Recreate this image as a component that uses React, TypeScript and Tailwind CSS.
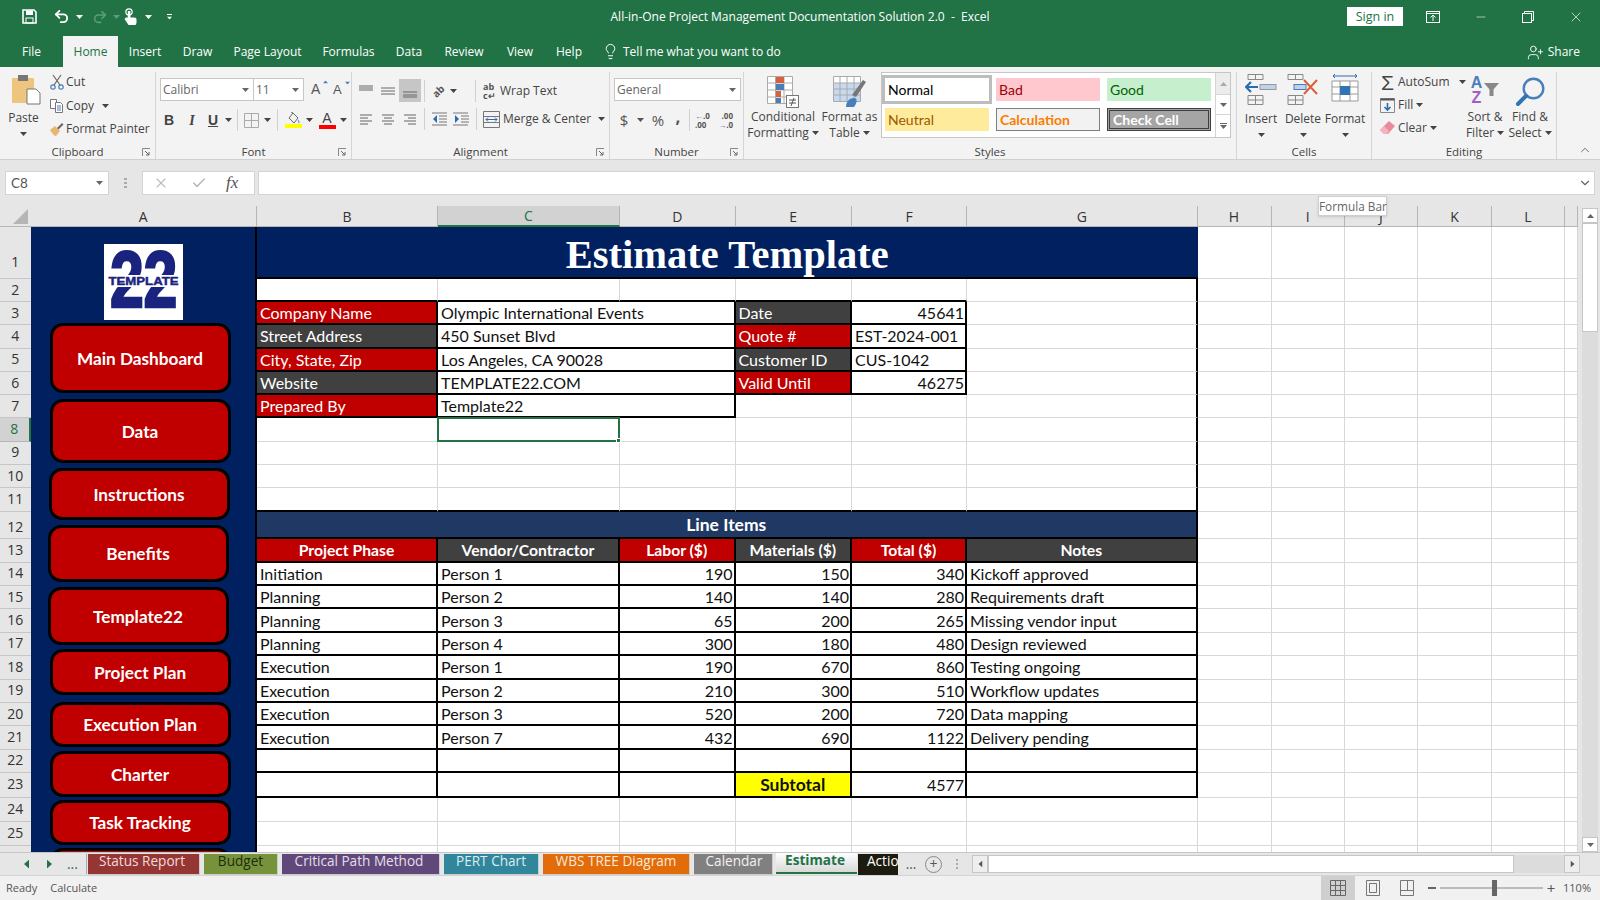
import React from 'react';
import { Undo2, Redo2, X, Minus, Lightbulb, UserPlus, Check, ChevronUp, ChevronDown } from 'lucide-react';

const Caret = ({ className = '' }: { className?: string }) => (
  <svg width="7" height="4" viewBox="0 0 7 4" className={`shrink-0 ${className}`}>
    <path d="M0 0h7L3.5 4z" fill="currentColor" />
  </svg>
);

const Launcher = () => (
  <svg width="9" height="9" viewBox="0 0 9 9" className="absolute right-[4px] top-[3px]">
    <path d="M.5 8V.5H8" fill="none" stroke="#888" />
    <path d="M3 3l4 4M7 4v3H4" fill="none" stroke="#666" />
  </svg>
);

const Divider = ({ className = '' }: { className?: string }) => <div className={`w-px h-[22px] bg-[#d0d0d0] ${className}`} />;

const Lines = ({ rows, color = '#666' }: { rows: [number, number, number][]; color?: string }) => (
  <svg width="16" height="16" viewBox="0 0 16 16">
    {rows.map(([a, b, y], i) => (
      <line key={i} x1={a} x2={b} y1={y} y2={y} stroke={color} strokeWidth="1" />
    ))}
  </svg>
);

const Group = ({ width, label, launcher, children }: { width: string; label: string; launcher?: boolean; children: React.ReactNode }) => (
  <div className={`${width} h-[87px] mt-[5px] flex flex-col border-r border-[#d6d6d6] shrink-0`}>
    <div className="flex-1 flex min-h-0">{children}</div>
    <div className="relative h-[14px] leading-[14px] text-center text-[11.5px] text-[#444]">
      {label}
      {launcher && <Launcher />}
    </div>
  </div>
);

const BigButton = ({ width, icon, top, bottom }: { width: string; icon: React.ReactNode; top: string; bottom: string }) => (
  <div className={`${width} flex flex-col items-center shrink-0`}>
    <div className="h-[38px] flex items-center justify-center">{icon}</div>
    <div className="h-[16px] leading-[16px] mt-[-1px] whitespace-nowrap">{top}</div>
    <div className="h-[16px] leading-[16px] whitespace-nowrap flex items-center gap-[3px]">
      {bottom}
      <Caret />
    </div>
  </div>
);

const TitleBar = () => (
  <div className="h-[33px] grid grid-cols-[1fr_auto_1fr] items-center text-white">
    <div className="flex items-center pl-[22px]">
      <svg width="15" height="15" viewBox="0 0 15 15" className="mr-[16px]">
        <path d="M1 1h11l2 2v11H1z" fill="none" stroke="#fff" strokeWidth="1.6" />
        <rect x="4" y="1.5" width="7" height="4.5" fill="#fff" />
        <rect x="4" y="9" width="7" height="5" fill="none" stroke="#fff" />
      </svg>
      <Undo2 size={17} strokeWidth={2.6} />
      <Caret className="ml-[6px]" />
      <Redo2 size={16} strokeWidth={2.4} className="ml-[9px] text-[#5c9c7c]" />
      <Caret className="ml-[5px] text-[#5c9c7c]" />
      <svg width="15" height="17" viewBox="0 0 15 17" className="ml-[3px]">
        <circle cx="6" cy="4" r="3.200" fill="none" stroke="#fff" strokeWidth="1.200" />
        <rect x="4.800" y="3" width="2.600" height="8" fill="#fff" />
        <path d="M3 9.500h8.500q2 0 2 2V15l-1 2H5.500L1.500 11z" fill="#fff" />
      </svg>
      <Caret className="ml-[7px]" />
      <div className="ml-[14px] flex flex-col items-center gap-[1px]">
        <div className="w-[5px] h-px bg-white" />
        <Caret className="scale-75" />
      </div>
    </div>
    <div className="text-[12px] whitespace-pre">All-in-One Project Management Documentation Solution 2.0  -  Excel</div>
    <div className="flex items-center justify-end">
      <div className="w-[56px] h-[19px] bg-white text-[#217346] text-[12.5px] leading-[19px] text-center">Sign in</div>
      <svg width="14" height="12" viewBox="0 0 14 12" className="ml-[23px]">
        <rect x=".5" y=".5" width="13" height="11" fill="none" stroke="#fff" />
        <path d="M.5 2.5h13M7 10V4M4.5 6.5L7 4l2.5 2.5" fill="none" stroke="#fff" />
      </svg>
      <Minus size={14} strokeWidth={1} className="ml-[34px]" />
      <svg width="12" height="12" viewBox="0 0 12 12" className="ml-[34px]">
        <rect x=".5" y="2.5" width="9" height="9" fill="none" stroke="#fff" />
        <path d="M2.5 2.5v-2h9v9h-2" fill="none" stroke="#fff" />
      </svg>
      <X size={16} strokeWidth={1} className="ml-[34px] mr-[16px]" />
    </div>
  </div>
);

const MENU = [
  ['Insert', 'w-[54px]'],
  ['Draw', 'w-[51px]'],
  ['Page Layout', 'w-[89px]'],
  ['Formulas', 'w-[73px]'],
  ['Data', 'w-[48px]'],
  ['Review', 'w-[62px]'],
  ['View', 'w-[50px]'],
  ['Help', 'w-[48px]'],
];

const MenuBar = () => (
  <div className="h-[34px] flex items-end text-white text-[12px]">
    <div className="w-[63px] h-[34px] leading-[37px] text-center">File</div>
    <div className="w-[55px] h-[31px] leading-[31px] text-center bg-[#f3f3f3] text-[#217346]">Home</div>
    {MENU.map(([name, w]) => (
      <div key={name} className={`${w} h-[34px] leading-[37px] text-center`}>{name}</div>
    ))}
    <div className="h-[34px] flex items-center ml-[9px] pt-[3px]">
      <Lightbulb size={17} strokeWidth={1.4} />
      <span className="ml-[4px]">Tell me what you want to do</span>
    </div>
    <div className="ml-auto h-[34px] flex items-center mr-[20px] pt-[4px] text-[12px]">
      <UserPlus size={17} strokeWidth={1.3} className="mr-[4px]" />
      Share
    </div>
  </div>
);

const SmallRow = ({ icon, children }: { icon: React.ReactNode; children: React.ReactNode }) => (
  <div className="h-5 flex items-center whitespace-nowrap">
    <div className="w-[19px] flex justify-center shrink-0">{icon}</div>
    {children}
  </div>
);

const ClipboardGroup = () => (
  <Group width="w-[156px]" label="Clipboard" launcher>
    <div className="w-[47px] flex flex-col items-center">
      <svg width="30" height="30" viewBox="0 0 30 30" className="mt-[3px] ml-[5px] shrink-0">
        <rect x="1" y="3" width="22" height="25" rx="1" fill="#edc57d" />
        <rect x="7" y="0" width="10" height="6" fill="#777" />
        <path d="M16 14h9l4 4v11H16z" fill="#fff" stroke="#777" />
      </svg>
      <div className="mt-[6px] leading-[14px]">Paste</div>
      <Caret className="mt-[7px]" />
    </div>
    <div className="flex flex-col gap-[3.5px]">
      <SmallRow icon={
        <svg width="14" height="16" viewBox="0 0 14 16" fill="none" stroke="#4a7ebb" strokeWidth="1.2">
          <circle cx="3" cy="13" r="2.2" />
          <circle cx="11" cy="13" r="2.2" />
          <path d="M4 11L11 1M10 11L3 1" stroke="#666" />
        </svg>
      }>Cut</SmallRow>
      <SmallRow icon={
        <svg width="15" height="15" viewBox="0 0 15 15" fill="#fff" stroke="#777">
          <path d="M1.5 1.5h6v9h-6z" />
          <path d="M6.5 4.5h5l2 2v8h-7z" />
          <path d="M8 8h4M8 10h4M8 12h4" stroke="#4a7ebb" />
        </svg>
      }>
        Copy
        <Caret className="ml-[8px]" />
      </SmallRow>
      <SmallRow icon={
        <svg width="15" height="15" viewBox="0 0 15 15">
          <path d="M1 8l5-4 5 5-4 5c-2 0-4-3-6-6z" fill="#e8b66e" />
          <path d="M8 6l5-5 1.5 1.5-5 5z" fill="#666" />
        </svg>
      }>Format Painter</SmallRow>
    </div>
  </Group>
);

const FontGroup = () => (
  <Group width="w-[196px]" label="Font" launcher>
    <div className="pl-[4px] flex flex-col">
      <div className="flex items-center mt-[6px]">
        <div className="w-[94px] h-[23px] bg-white border border-[#c6c6c6] flex items-center justify-between px-[2px] pr-[4px] text-[#666]">
          Calibri
          <Caret />
        </div>
        <div className="w-[50px] h-[23px] bg-white border border-l-0 border-[#c6c6c6] flex items-center justify-between px-[2px] pr-[4px] text-[#666]">
          11
          <Caret />
        </div>
        <div className="ml-[7px] w-[20px] text-[14px] font-['Liberation_Sans',sans-serif] text-[#555] relative">
          A<Caret className="absolute right-[2px] top-[1px] rotate-180 scale-75 text-[#4a7ebb]" />
        </div>
        <div className="ml-[2px] w-[20px] text-[13px] font-['Liberation_Sans',sans-serif] text-[#555] relative">
          A<Caret className="absolute right-[2px] top-[1px] scale-75 text-[#4a7ebb]" />
        </div>
      </div>
      <div className="flex items-center mt-[9px] h-5 text-[#444]">
        <div className="w-[22px] text-center font-bold text-[14px] font-['Liberation_Sans',sans-serif] ml-[-2px]">B</div>
        <div className="w-[22px] text-center italic font-bold text-[14px] font-['Liberation_Serif',serif] ml-[1px]">I</div>
        <div className="w-[20px] text-center font-bold underline text-[14px] font-['Liberation_Sans',sans-serif]">U</div>
        <Caret className="ml-[2px]" />
        <Divider className="ml-[5px]" />
        <svg width="15" height="15" viewBox="0 0 15 15" className="ml-[6px]" fill="none" stroke="#aaa">
          <path d="M.5.5h14v14H.5zM7.5.5v14M.5 7.5h14" />
        </svg>
        <Caret className="ml-[5px]" />
        <Divider className="ml-[6px]" />
        <div className="ml-[6px] w-[18px] flex flex-col items-center">
          <svg width="13" height="12" viewBox="0 0 13 12" fill="none" stroke="#666">
            <path d="M6 1l5 5-4 5-5-5zM6 1L4 0" />
            <path d="M11 8c1 1 1.500 3 .5 3" stroke="#4a7ebb" />
          </svg>
          <div className="w-[17px] h-[4px] bg-[#ffff00]" />
        </div>
        <Caret className="ml-[4px]" />
        <div className="ml-[5px] w-[18px] flex flex-col items-center">
          <div className="text-[14px] leading-[12px] font-['Liberation_Sans',sans-serif] text-[#444]">A</div>
          <div className="w-[17px] h-[4px] mt-[1px] bg-[#ff0000]" />
        </div>
        <Caret className="ml-[4px]" />
      </div>
    </div>
  </Group>
);

const AlignmentGroup = () => (
  <Group width="w-[258px]" label="Alignment" launcher>
    <div className="flex flex-col pl-[3px]">
      <div className="flex items-center mt-[7px] h-[23px]">
        <div className="w-[22px] flex justify-center"><Lines rows={[[1, 15, 3], [1, 15, 5], [1, 15, 7]]} /></div>
        <div className="w-[22px] flex justify-center"><Lines rows={[[1, 15, 5], [1, 15, 8], [1, 15, 11]]} /></div>
        <div className="w-[22px] h-[23px] bg-[#c6c6c6] flex justify-center items-center"><Lines rows={[[1, 15, 9], [1, 15, 12], [1, 15, 14]]} /></div>
        <Divider className="ml-[3px]" />
        <div className="ml-[3px] w-[20px] text-[10px] font-bold leading-none -rotate-45 text-center text-[#555]">ab</div>
        <Caret className="ml-[2px]" />
        <Divider className="ml-[18px]" />
        <div className="ml-[7px] w-[16px] text-[9px] leading-[9px] font-bold text-[#555]">ab<br />c↵</div>
        <span className="ml-[1px]">Wrap Text</span>
      </div>
      <div className="flex items-center mt-[7px] h-5">
        <div className="w-[22px] flex justify-center"><Lines rows={[[2, 14, 4], [2, 10, 7], [2, 14, 10], [2, 10, 13]]} /></div>
        <div className="w-[22px] flex justify-center"><Lines rows={[[2, 14, 4], [4, 12, 7], [2, 14, 10], [4, 12, 13]]} /></div>
        <div className="w-[22px] flex justify-center"><Lines rows={[[2, 14, 4], [6, 14, 7], [2, 14, 10], [6, 14, 13]]} /></div>
        <Divider className="ml-[3px]" />
        <svg width="16" height="14" viewBox="0 0 16 14" className="ml-[6px]" fill="none">
          <path d="M1 1h15M8 4h8M8 7h8M8 10h8M1 13h15" stroke="#777" />
          <path d="M6 3L2 7l4 4z" fill="#2b6cb0" />
        </svg>
        <svg width="16" height="14" viewBox="0 0 16 14" className="ml-[6px]" fill="none">
          <path d="M0 1h15M8 4h8M8 7h8M8 10h8M0 13h15" stroke="#777" />
          <path d="M2 3l4 4-4 4z" fill="#2b6cb0" />
        </svg>
        <Divider className="ml-[7px]" />
        <svg width="17" height="17" viewBox="0 0 17 17" className="ml-[6px]" fill="none" stroke="#777">
          <path d="M.5.5h16v16H.5zM.5 5.500h16M.5 11.500h16" />
          <path d="M3 8.500h11M5 6.500l-2 2 2 2M12 6.500l2 2-2 2" stroke="#2b6cb0" />
        </svg>
        <span className="ml-[3px] whitespace-nowrap">Merge &amp; Center</span>
        <Caret className="ml-[7px]" />
      </div>
    </div>
  </Group>
);

const NumberGroup = () => (
  <Group width="w-[134px]" label="Number" launcher>
    <div className="pl-[4px] flex flex-col">
      <div className="w-[127px] h-[23px] mt-[6px] bg-white border border-[#c6c6c6] flex items-center justify-between px-[2px] pr-[4px] text-[#666]">
        General
        <Caret />
      </div>
      <div className="flex items-center mt-[9px] h-5 text-[#555]">
        <span className="w-[20px] text-center text-[15px]">$</span>
        <Caret className="ml-[3px]" />
        <span className="ml-[5px] w-[18px] text-center text-[15px]">%</span>
        <span className="ml-[6px] w-[10px] text-center font-bold text-[17px] leading-[14px] -translate-y-[3px]">,</span>
        <Divider className="ml-[6px]" />
        <div className="ml-[5px] w-[18px] text-[8px] leading-[9px] font-bold"><span className="text-[#2b6cb0]">←</span>.0<br />.00</div>
        <div className="ml-[2px] w-[18px] text-[8px] leading-[9px] font-bold text-right">.00<br /><span className="text-[#2b6cb0]">→</span>.0</div>
      </div>
    </div>
  </Group>
);

const StyleCell = ({ className, children }: { className: string; children: React.ReactNode }) => (
  <div className={`h-[23px] px-[3px] font-['Lato',sans-serif] text-[14px] whitespace-nowrap ${className}`}>{children}</div>
);

const StylesGroup = () => (
  <Group width="w-[493px]" label="Styles">
    <div className="pl-[4px]">
      <BigButton width="w-[70px]" top="Conditional" bottom="Formatting" icon={
        <svg width="32" height="33" viewBox="0 0 32 33" className="mt-[2px]">
          <path d="M.5.5h25v27H.5zM8.500.5v27M17 .5v27M.5 7h25M.5 14h25M.5 21h25" fill="#fff" stroke="#aaa" />
          <rect x="9" y="1" width="8" height="6" fill="#d9603a" />
          <rect x="9" y="8" width="8" height="6" fill="#4a7ebb" />
          <rect x="9" y="15" width="5" height="6" fill="#d9603a" />
          <rect x="9" y="22" width="5" height="5" fill="#4a7ebb" />
          <rect x="19.500" y="19.500" width="12" height="12" fill="#fff" stroke="#777" />
          <path d="M22 24h7M22 27h7M27 22l-3 8" stroke="#555" fill="none" />
        </svg>
      } />
    </div>
    <BigButton width="w-[63px]" top="Format as" bottom="Table" icon={
      <svg width="34" height="33" viewBox="0 0 34 33" className="mt-[2px]">
        <path d="M.5.5h27v25H.5z" fill="#fff" stroke="#aaa" />
        <rect x="1" y="7" width="26" height="18" fill="#c6d9f0" />
        <path d="M7 .5v25M14 .5v25M21 .5v25M.5 7h27M.5 13h27M.5 19h27" stroke="#aaa" fill="none" />
        <path d="M19 19l11-15 3 2-10 15z" fill="#777" />
        <path d="M13 31c0-6 4-9 8-9s3 5 0 9z" fill="#4a7ebb" />
      </svg>
    } />
    <div className="w-[350px] h-[66px] flex bg-white border border-[#c6c6c6]">
      <div className="flex-1 grid grid-cols-3 gap-x-[7px] gap-y-[7px] pl-[3px] pr-[4px] pt-[5px] content-start">
        <StyleCell className="leading-[23px] bg-white text-black outline-[3px] outline-[#bdbdbd]">Normal</StyleCell>
        <StyleCell className="leading-[23px] bg-[#ffc7ce] text-[#9c0006]">Bad</StyleCell>
        <StyleCell className="leading-[23px] bg-[#c6efce] text-[#006100]">Good</StyleCell>
        <StyleCell className="leading-[23px] bg-[#ffeb9c] text-[#9c5700]">Neutral</StyleCell>
        <StyleCell className="leading-[21px] bg-[#f2f2f2] text-[#fa7d00] font-bold border border-[#7f7f7f]">Calculation</StyleCell>
        <StyleCell className="leading-[17px] bg-[#a5a5a5] text-white font-bold border-[3px] border-double border-[#3f3f3f]">Check Cell</StyleCell>
      </div>
      <div className="w-[15px] flex flex-col border-l border-[#d4d4d4] text-[#666]">
        <div className="h-[22px] flex items-center justify-center border-b border-[#d4d4d4] bg-[#ececec]"><Caret className="rotate-180 text-[#aaa]" /></div>
        <div className="h-[20px] flex items-center justify-center border-b border-[#d4d4d4]"><Caret /></div>
        <div className="flex-1 flex flex-col items-center justify-center gap-[1px]">
          <div className="w-[7px] h-px bg-[#666]" />
          <Caret />
        </div>
      </div>
    </div>
  </Group>
);

const CellsGroup = () => (
  <Group width="w-[135px]" label="Cells">
    <div className="pl-[3px] flex">
      <div className="w-[42px] flex flex-col items-center">
        <svg width="32" height="32" viewBox="0 0 32 32" className="mt-[2px]" fill="none" stroke="#888">
          <path d="M3 .5h15v5H3zM10.500.5v5M3 21.500h15v9H3zM10.500 21.500v9M3 26h15" />
          <rect x="15" y="10.500" width="16" height="5" fill="#bcd3ea" stroke="#999" />
          <path d="M13 13H1M6 8l-5 5 5 5" stroke="#2b6cb0" strokeWidth="2.200" />
        </svg>
        <div className="mt-[5px] leading-[16px]">Insert</div>
        <Caret className="mt-[6px]" />
      </div>
      <div className="w-[42px] flex flex-col items-center">
        <svg width="32" height="32" viewBox="0 0 32 32" className="mt-[2px]" fill="none" stroke="#888">
          <path d="M1 .5h15v5H1zM8.500.5v5M1 21.500h15v9H1zM8.500 21.500v9M1 26h15" />
          <rect x="7" y="10.500" width="12" height="5" fill="#bcd3ea" stroke="#4a7ebb" />
          <path d="M17 6l13 14M30 6L17 20" stroke="#d9603a" strokeWidth="2" />
        </svg>
        <div className="mt-[5px] leading-[16px]">Delete</div>
        <Caret className="mt-[6px]" />
      </div>
      <div className="w-[42px] flex flex-col items-center">
        <svg width="32" height="32" viewBox="0 0 32 32" className="mt-[1px]" fill="none" stroke="#999">
          <path d="M3 8h26v20H3zM11 8v20M21 8v20M3 14h26M3 21h26" fill="#fff" />
          <rect x="11" y="13" width="10" height="9" fill="#2f75b5" stroke="none" />
          <path d="M4 3h24M4 3l2-2M4 3l2 2M28 3l-2-2M28 3l-2 2" stroke="#2b6cb0" />
        </svg>
        <div className="mt-[6px] leading-[16px]">Format</div>
        <Caret className="mt-[6px]" />
      </div>
    </div>
  </Group>
);

const EditingGroup = () => (
  <Group width="w-[185px]" label="Editing">
    <div className="w-[90px] pl-[6px] flex flex-col gap-[3px]">
      <SmallRow icon={<span className="text-[21px] leading-none text-[#444] font-['Liberation_Sans',sans-serif]">Σ</span>}>
        <span className="ml-[1px]">AutoSum</span>
        <Caret className="ml-[9px]" />
      </SmallRow>
      <SmallRow icon={
        <svg width="15" height="15" viewBox="0 0 15 15" fill="none">
          <path d="M.5.5h14v14H.5z" stroke="#888" />
          <path d="M.5 1.500h14" stroke="#555" strokeWidth="2" />
          <path d="M7.500 5v7M4.500 9l3 3 3-3" stroke="#2b6cb0" strokeWidth="1.600" />
        </svg>
      }>
        <span className="ml-[1px]">Fill</span>
        <Caret className="ml-[3px]" />
      </SmallRow>
      <SmallRow icon={
        <svg width="15" height="14" viewBox="0 0 15 14">
          <path d="M9 0l6 5-7 8H4L0 9z" fill="#e98b9b" />
          <path d="M0 9l4-4 5 5-2 3H4z" fill="#f3b4be" />
        </svg>
      }>
        <span className="ml-[1px]">Clear</span>
        <Caret className="ml-[3px]" />
      </SmallRow>
    </div>
    <BigButton width="w-[46px]" top="Sort &" bottom="Filter" icon={
      <div className="flex items-center mt-[-3px] font-['Liberation_Sans',sans-serif]">
        <div className="text-[16px] leading-[15px] font-bold text-center">
          <div className="text-[#4a7ebb]">A</div>
          <div className="text-[#9f5fc1]">Z</div>
        </div>
        <svg width="15" height="15" viewBox="0 0 15 15" className="ml-[2px]">
          <path d="M0 1h15L9.500 7.500V14h-4V7.500z" fill="#888" />
        </svg>
      </div>
    } />
    <BigButton width="w-[44px]" top="Find &" bottom="Select" icon={
      <svg width="30" height="30" viewBox="0 0 30 30" className="mt-[2px]" fill="none">
        <circle cx="18.500" cy="11.500" r="9.800" stroke="#4a7ebb" strokeWidth="2.400" />
        <path d="M11 19L3 27" stroke="#2f75b5" strokeWidth="4" strokeLinecap="round" />
      </svg>
    } />
  </Group>
);

const Ribbon = () => (
  <div className="h-[93px] flex bg-[#f3f3f3] border-b border-[#d0d0d0] text-[12px] text-[#444] relative">
    <ClipboardGroup />
    <FontGroup />
    <AlignmentGroup />
    <NumberGroup />
    <StylesGroup />
    <CellsGroup />
    <EditingGroup />
    <div className="flex-1 flex items-end justify-end pr-[8px] pb-[2px]">
      <ChevronUp size={14} strokeWidth={1.4} className="text-[#555]" />
    </div>
  </div>
);

const FormulaStrip = () => (
  <div className="h-[46px] relative flex items-start pt-[11px] pl-[5px] bg-[#e6e6e6] text-[#555]">
    <div className="w-[104px] h-[24px] bg-white border border-[#d4d4d4] flex items-center justify-between pl-[5px] pr-[5px] font-['Lato',sans-serif] text-[13.5px]">
      C8
      <Caret className="text-[#666]" />
    </div>
    <div className="w-[33px] h-[24px] flex flex-col items-center justify-center gap-[2px]">
      <div className="w-[3px] h-[2px] bg-[#aaa]" />
      <div className="w-[3px] h-[2px] bg-[#aaa]" />
      <div className="w-[3px] h-[2px] bg-[#aaa]" />
    </div>
    <div className="w-[113px] h-[24px] bg-white border border-[#d4d4d4] flex items-center">
      <X size={16} strokeWidth={1.6} className="ml-[10px] text-[#bbb]" />
      <Check size={16} strokeWidth={2.4} className="ml-[22px] text-[#bbb]" />
      <span className="ml-[19px] font-['Liberation_Serif',serif] italic text-[17px] text-[#555]">fx</span>
    </div>
    <div className="flex-1 ml-[3px] mr-[5px] h-[24px] bg-white border border-[#d4d4d4] flex items-center justify-end pr-[2px]">
      <ChevronDown size={14} strokeWidth={2} className="text-[#666]" />
    </div>
    <div className="absolute left-[1318px] top-[36px] w-[69px] h-[20px] bg-white border border-[#cfcfcf] shadow-sm text-[11.8px] leading-[18px] text-center text-[#666] z-10 whitespace-nowrap">
      Formula Bar
    </div>
  </div>
);

const GRID_COLS = 'grid-cols-[30.5px_226.5px_181px_182px_115.5px_116.5px_115px_230.5px_74px_73.5px_73px_74px_73px_13px]';
const GRID_ROWS = 'grid-rows-[21px_52px_23px_repeat(9,23.3px)_27.5px_repeat(10,23.4px)_24.6px_24.8px_23.4px_24px]';

const COLUMN_HEADS = ['A', 'B', 'C', 'D', 'E', 'F', 'G', 'H', 'I', 'J', 'K', 'L', ''];

type Cell = { text?: string; className?: string };

const LIGHT = 'border-r border-b border-[#d8d8d8]';
const BOX = 'border-r-2 border-b-2 border-black pt-[1px]';
const RED = `${BOX} bg-[#c00000] text-white pl-[3px]`;
const DARK = `${BOX} bg-[#404040] text-white pl-[3px]`;
const VALUE = `${BOX} bg-white pl-[3px]`;
const NUM = `${BOX} bg-white justify-end pr-[1px]`;
const HEAD_RED = `${BOX} bg-[#c00000] text-white font-bold text-[15.7px] justify-center`;
const HEAD_DARK = `${BOX} bg-[#404040] text-white font-bold text-[15.7px] justify-center`;

const INFO: [string, string, string, string, string, string][] = [
  ['Company Name', 'Olympic International Events', 'Date', '45641', DARK, NUM],
  ['Street Address', '450 Sunset Blvd', 'Quote #', 'EST-2024-001', RED, VALUE],
  ['City, State, Zip', 'Los Angeles, CA 90028', 'Customer ID', 'CUS-1042', DARK, VALUE],
  ['Website', 'TEMPLATE22.COM', 'Valid Until', '46275', RED, NUM],
];

const ITEMS: [string, string, number, number, number, string][] = [
  ['Initiation', 'Person 1', 190, 150, 340, 'Kickoff approved'],
  ['Planning', 'Person 2', 140, 140, 280, 'Requirements draft'],
  ['Planning', 'Person 3', 65, 200, 265, 'Missing vendor input'],
  ['Planning', 'Person 4', 300, 180, 480, 'Design reviewed'],
  ['Execution', 'Person 1', 190, 670, 860, 'Testing ongoing'],
  ['Execution', 'Person 2', 210, 300, 510, 'Workflow updates'],
  ['Execution', 'Person 3', 520, 200, 720, 'Data mapping'],
  ['Execution', 'Person 7', 432, 690, 1122, 'Delivery pending'],
];

// cells for columns B..G of one sheet row, merged cells carry their own span class
const rowCells = (row: number): Cell[] => {
  const blank = (extra = ''): Cell => ({ className: `${LIGHT} ${extra}` });
  const gEdge = 'border-r-2 border-r-black';
  if (row === 1) {
    return [{
      text: 'Estimate Template',
      className: "col-span-6 bg-[#002060] text-white justify-center pt-[6px] font-['Liberation_Serif',serif] font-bold text-[40.5px] border-b-2 border-black",
    }];
  }
  if (row === 2) {
    const low = 'border-b-2 border-b-black';
    return [blank(low), blank(low), blank(low), blank(low), blank(low), blank(gEdge)];
  }
  if (row >= 3 && row <= 6) {
    const [label, value, label2, value2, labelCls, valueCls] = INFO[row - 3];
    return [
      { text: label, className: row % 2 ? RED : DARK },
      { text: value, className: `${VALUE} col-span-2` },
      { text: label2, className: labelCls },
      { text: value2, className: valueCls },
      blank(gEdge),
    ];
  }
  if (row === 7) {
    return [
      { text: 'Prepared By', className: RED },
      { text: 'Template22', className: `${VALUE} col-span-2` },
      blank(),
      blank(),
      blank(gEdge),
    ];
  }
  if (row >= 8 && row <= 11) {
    const low = row === 11 ? 'border-b-2 border-b-black' : '';
    return [blank(low), blank(low), blank(low), blank(low), blank(low), blank(`${low} ${gEdge}`)];
  }
  if (row === 12) {
    return [{ text: 'Line Items', className: `${BOX} col-span-6 bg-[#1f3864] text-white font-bold text-[17.5px] justify-center` }];
  }
  if (row === 13) {
    return [
      { text: 'Project Phase', className: HEAD_RED },
      { text: 'Vendor/Contractor', className: HEAD_DARK },
      { text: 'Labor ($)', className: HEAD_RED },
      { text: 'Materials ($)', className: HEAD_DARK },
      { text: 'Total ($)', className: HEAD_RED },
      { text: 'Notes', className: HEAD_DARK },
    ];
  }
  if (row >= 14 && row <= 21) {
    const [phase, person, labor, materials, total, notes] = ITEMS[row - 14];
    return [
      { text: phase, className: VALUE },
      { text: person, className: VALUE },
      { text: String(labor), className: NUM },
      { text: String(materials), className: NUM },
      { text: String(total), className: NUM },
      { text: notes, className: VALUE },
    ];
  }
  if (row === 22) {
    return Array.from({ length: 6 }, () => ({ className: BOX }));
  }
  if (row === 23) {
    return [
      { className: BOX },
      { className: BOX },
      { className: BOX },
      { text: 'Subtotal', className: `${BOX} bg-[#ffff00] font-bold text-[17.5px] justify-center` },
      { text: '4577', className: NUM },
      { className: BOX },
    ];
  }
  return [blank(), blank(), blank(), blank(), blank(), blank()];
};

const NAV = [
  ['Main Dashboard', 'mt-[3px] h-[70px] ml-[19px]'],
  ['Data', 'mt-[6px] h-[64px] ml-[19px]'],
  ['Instructions', 'mt-[5px] h-[52px] ml-[18px]'],
  ['Benefits', 'mt-[5px] h-[57px] ml-[17px]'],
  ['Template22', 'mt-[5px] h-[58px] ml-[17px]'],
  ['Project Plan', 'mt-[4px] h-[46px] ml-[19px]'],
  ['Execution Plan', 'mt-[7px] h-[45px] ml-[19px]'],
  ['Charter', 'mt-[4px] h-[46px] ml-[19px]'],
  ['Task Tracking', 'mt-[3px] h-[45px] ml-[19px]'],
  ['', 'mt-[3px] h-[45px] ml-[19px]'],
];

const Logo = () => (
  <div className="w-[79px] h-[76px] mt-[17px] ml-[73px] bg-white shrink-0">
    <svg width="79" height="76" viewBox="0 0 79 76">
      <g fill="#1a237e" stroke="#1a237e" strokeWidth="2.500" fontFamily="'Liberation Sans', sans-serif" fontWeight="700">
        <text x="0" y="63" fontSize="80" transform="scale(.76 1)">
          <tspan x="8">2</tspan>
          <tspan x="52">2</tspan>
        </text>
      </g>
      <rect x="0" y="31" width="79" height="12" fill="#fff" />
      <text x="4.500" y="41" fontSize="10.500" textLength="70" lengthAdjust="spacingAndGlyphs" fontWeight="700" fill="#1a237e" stroke="#1a237e" strokeWidth=".4" fontFamily="'Liberation Sans', sans-serif">TEMPLATE</text>
    </svg>
  </div>
);

const Sidebar = () => (
  <div className="col-start-2 row-[2/span_26] bg-[#002060] border-r-2 border-black flex flex-col overflow-hidden">
    <Logo />
    {NAV.map(([name, cls], i) => (
      <div key={i} className={`${cls} w-[181px] shrink-0 rounded-[13px] border-[3px] border-black bg-[#c00000] text-white font-bold text-[17.2px] pt-[1px] flex items-center justify-center`}>
        {name}
      </div>
    ))}
  </div>
);

const Sheet = () => (
  <div className={`w-[1578px] h-[646px] overflow-hidden grid ${GRID_COLS} ${GRID_ROWS} font-['Lato',sans-serif] text-[16px] text-[#111] bg-white`}>
    <div className="bg-[#e6e6e6] border-b border-[#b5b5b5] flex items-end justify-end pr-[3px] pb-[2px]">
      <svg width="15" height="15" viewBox="0 0 15 15"><path d="M15 0v15H0z" fill="#b5b5b5" /></svg>
    </div>
    {COLUMN_HEADS.map((c, i) => (
      <div key={i} className={`font-['Open_Sans',sans-serif] text-[14px] flex items-center justify-center border-r border-b ${c === 'C' ? 'bg-[#d2d2d2] text-[#217346] border-b-2 border-b-[#217346] border-r-[#b5b5b5]' : 'bg-[#e6e6e6] text-[#333] border-[#b5b5b5]'}`}>
        {c}
      </div>
    ))}
    <Sidebar />
    {Array.from({ length: 26 }, (_, i) => i + 1).map((row) => (
      <React.Fragment key={row}>
        <div className={`col-start-1 font-['Open_Sans',sans-serif] text-[14px] flex justify-center border-b ${row === 1 ? 'items-end pb-[6px]' : row === 12 ? 'items-end pb-[1px]' : 'items-center pb-[2px]'} ${row === 8 ? 'bg-[#d2d2d2] text-[#217346] border-r-2 border-r-[#217346] border-b-[#b5b5b5]' : 'bg-[#e6e6e6] text-[#333] border-[#c6c6c6]'}`}>
          {row}
        </div>
        {rowCells(row).map((cell, i) => (
          <div key={i} className={`relative flex items-center whitespace-nowrap ${row === 8 && i === 1 ? 'z-10' : 'overflow-hidden'} ${cell.className}`}>
            {cell.text}
            {row === 8 && i === 1 && (
              <div className="absolute -left-[1px] -top-[1px] -right-[1px] -bottom-[1px] border-2 border-[#217346]">
                <div className="absolute -right-[3px] -bottom-[3px] w-[5px] h-[5px] bg-[#217346] border border-white" />
              </div>
            )}
          </div>
        ))}
        {Array.from({ length: 6 }, (_, i) => (
          <div key={i} className={LIGHT} />
        ))}
      </React.Fragment>
    ))}
  </div>
);

const VScroll = () => (
  <div className="w-[22px] h-[646px] pl-[4px] pr-[2px] pt-[2px] flex flex-col">
    <div className="flex-1 flex flex-col bg-[#dcdcdc]">
      <div className="h-[15px] bg-white border border-[#c6c6c6] flex items-center justify-center text-[#666]"><Caret className="rotate-180" /></div>
      <div className="h-[109px] bg-white border border-[#c6c6c6]" />
      <div className="mt-auto h-[15px] bg-white border border-[#c6c6c6] flex items-center justify-center text-[#666]"><Caret /></div>
    </div>
  </div>
);

const TABS = [
  ['Status Report', 'w-[112px] pr-[3px] bg-[#963634] text-[#f2dcdb]'],
  ['Budget', 'w-[74px] bg-[#76933c] text-[#1d2b0c]'],
  ['Critical Path Method', 'w-[158px] pr-[3px] bg-[#60497a] text-[#e4dfec]'],
  ['PERT Chart', 'w-[95px] bg-[#31869b] text-[#daeef3]'],
  ['WBS TREE Diagram', 'w-[147px] bg-[#e26b0a] text-[#fde9d9]'],
  ['Calendar', 'w-[79px] pl-[2px] bg-[#808080] text-[#f2f2f2]'],
];

const SheetTabs = () => (
  <div className="h-[23px] flex bg-[#e6e6e6] border-t border-[#c6c6c6] text-[13.6px] leading-[14px] text-center">
    <div className="w-[87px] flex items-center border-r border-[#aaa] my-[1px]">
      <Caret className="ml-[23px] rotate-90 text-[#217346] scale-125" />
      <Caret className="ml-[16px] -rotate-90 text-[#217346] scale-125" />
      <span className="ml-[14px] leading-[14px] text-[#217346]">...</span>
    </div>
    <div className="flex gap-[4px] pl-[1px] h-[21px] mt-[1px]">
      {TABS.map(([name, cls]) => (
        <div key={name} className={`${cls} border-r border-b border-[#ccc] whitespace-nowrap overflow-hidden`}>{name}</div>
      ))}
      <div className="w-[81px] pr-[3px] ml-[-1px] h-[21px] mt-[-1px] bg-gradient-to-b from-white to-[#d8d8d8] border-b-2 border-[#217346] text-[#217346] font-bold">Estimate</div>
      <div className="w-[40px] ml-[-3px] bg-[#1d1b10] text-white overflow-hidden text-left pl-[9px] whitespace-nowrap">Action</div>
    </div>
    <div className="flex items-center h-full text-[#555]">
      <span className="ml-[6px] w-[14px] leading-[12px]">...</span>
      <div className="ml-[7px] w-[17px] h-[17px] rounded-full border border-[#888] flex items-center justify-center text-[14px] leading-none">+</div>
      <div className="ml-[14px] flex flex-col gap-[2px]">
        <div className="w-[2px] h-[2px] bg-[#aaa]" />
        <div className="w-[2px] h-[2px] bg-[#aaa]" />
        <div className="w-[2px] h-[2px] bg-[#aaa]" />
      </div>
    </div>
    <div className="flex-1 ml-[14px] mr-[20px] flex items-center h-[18px] mt-[2px] bg-[#dcdcdc]">
      <div className="w-[16px] h-full bg-[#eeeeee] border border-[#c6c6c6] flex items-center justify-center text-[#555]"><Caret className="rotate-90" /></div>
      <div className="w-[526px] h-full bg-white border border-[#c6c6c6]" />
      <div className="ml-auto w-[16px] h-full bg-[#eeeeee] border border-[#c6c6c6] flex items-center justify-center text-[#555]"><Caret className="-rotate-90" /></div>
    </div>
  </div>
);

const StatusBar = () => (
  <div className="h-[25px] flex items-center bg-[#f1f1f1] border-t border-[#d4d4d4] text-[11px] text-[#555]">
    <span className="ml-[6px]">Ready</span>
    <span className="ml-[13px]">Calculate</span>
    <div className="ml-auto w-[34px] h-full bg-[#cfcfcf] flex items-center justify-center">
      <svg width="16" height="16" viewBox="0 0 16 16" fill="none" stroke="#666"><path d="M.5.5h15v15H.5zM5.500.5v15M10.500.5v15M.5 5.500h15M.5 10.500h15" /></svg>
    </div>
    <svg width="14" height="16" viewBox="0 0 14 16" className="ml-[11px]" fill="none" stroke="#777"><path d="M.5.5h13v15H.5z" /><path d="M3.500 3.500h7v9h-7z" /></svg>
    <svg width="14" height="16" viewBox="0 0 14 16" className="ml-[20px]" fill="none" stroke="#777"><path d="M.5.5h13v15H.5zM.5 10.500h13M7.500.5v10" /></svg>
    <div className="ml-[14px] w-[8px] h-[2px] bg-[#666]" />
    <div className="ml-[4px] w-[103px] h-[2px] bg-[#bbb] relative">
      <div className="absolute left-[52px] top-[-7px] w-[5px] h-[16px] bg-[#666]" />
    </div>
    <div className="ml-[3px] w-[10px] text-[15px] leading-none text-center">+</div>
    <span className="ml-[7px] mr-[9px]">110%</span>
  </div>
);

export default function App() {
  return (
    <div className="w-[1600px] h-[900px] overflow-hidden flex flex-col font-['Open_Sans','Noto_Sans',sans-serif] bg-[#e6e6e6]">
      <div className="bg-[#217346]">
        <TitleBar />
        <MenuBar />
      </div>
      <Ribbon />
      <FormulaStrip />
      <div className="flex">
        <Sheet />
        <VScroll />
      </div>
      <SheetTabs />
      <StatusBar />
    </div>
  );
}
